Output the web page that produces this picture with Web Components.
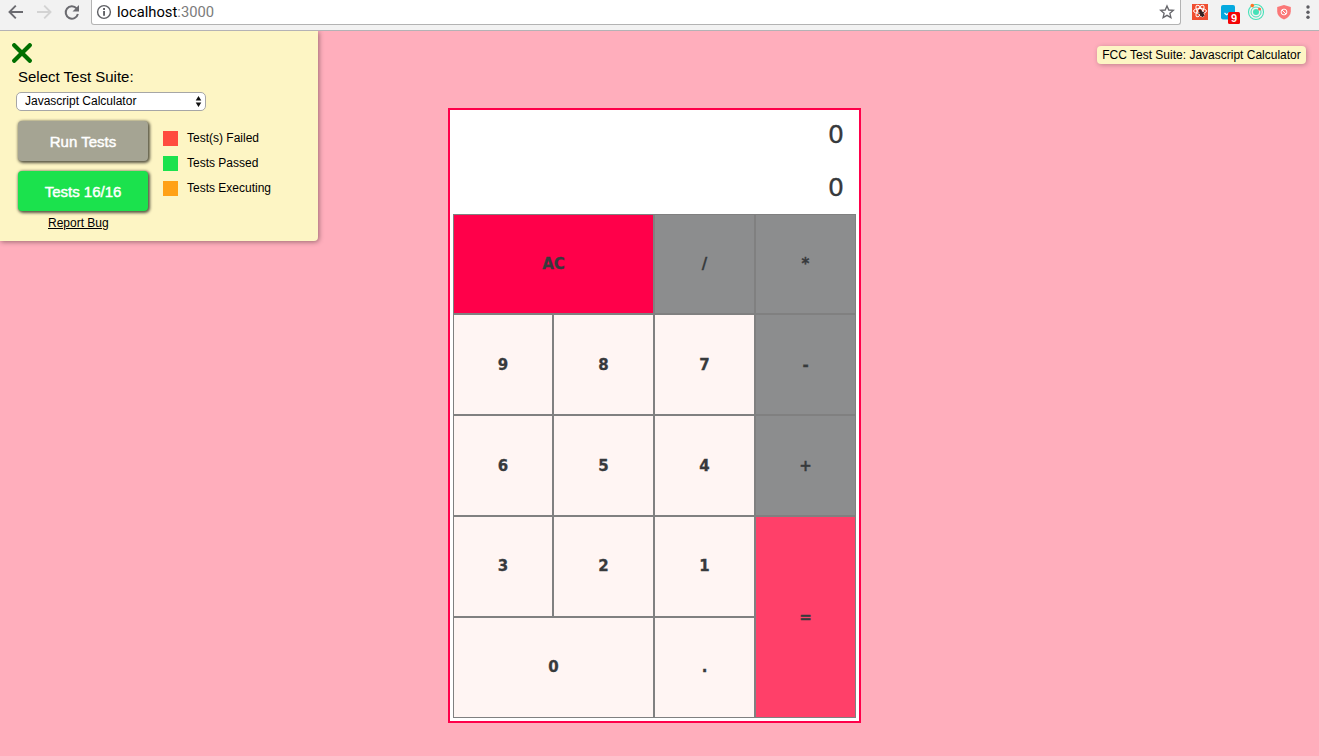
<!DOCTYPE html>
<html lang="en">
<head>
<meta charset="utf-8">
<title>Javascript Calculator</title>
<style>
html, body { margin: 0; height: 100%; overflow: hidden; }
body { font-family: "Liberation Sans", Arial, sans-serif; background: #ffaebc; }
</style>
</head>
<body>
<app-window></app-window>
<script>
const define = (name, html) => customElements.define(name, class extends HTMLElement {
  constructor() {
    super();
    const t = document.createElement('template');
    t.innerHTML = html;
    this.attachShadow({ mode: 'open' }).appendChild(t.content.cloneNode(true));
  }
});

define('browser-bar', `
<style>
:host { display: flex; box-sizing: border-box; height: 31px; background: #f2f2f2; border-bottom: 1px solid #b4b2b5; align-items: flex-start; position: relative; z-index: 1; }
svg { display: block; flex: none; }
.nav { width: 91px; height: 28px; }
.field { box-sizing: border-box; width: 1090px; height: 25px; border: 1px solid #b3b3b3; border-top: 0; border-radius: 0 0 3px 3px; background: #fff; display: flex; align-items: center; padding: 0 5px 0 4px; }
.url { flex: 1; margin-left: 5px; font: 14.75px/24px Roboto, sans-serif; color: #000; white-space: pre; }
.url span { color: #7b7b7b; }
.ext { width: 138px; height: 28px; }
.ext text { font: bold 11px "Liberation Sans", sans-serif; }
</style>
<svg class="nav" viewBox="0 0 91 28" fill="none" stroke-width="1.9">
  <path d="M23 12H10M15.8 5.7L9.5 12l6.3 6.3" stroke="#6b6b70"/>
  <path d="M37 12H50M44.2 5.7l6.3 6.3-6.3 6.3" stroke="#d3d3d3"/>
  <path d="M76.6 8.4A6.2 6.2 0 1 0 77.9 14" stroke="#6b6b70" stroke-width="2"/>
  <path d="M79 5v6.5h-6.5z" fill="#6b6b70"/>
</svg>
<div class="field">
  <svg width="16" height="16" viewBox="0 0 16 16"><circle cx="8" cy="8" r="6.4" fill="none" stroke="#5f6065" stroke-width="1.4"/><path d="M7.1 7h1.9v4.8H7.1zM7.1 4.1h1.9v1.8H7.1z" fill="#5f6065"/></svg>
  <div class="url">localhost<span>:3000</span></div>
  <svg width="16" height="16" viewBox="0 0 16 16"><path d="M8 1.9l1.8 4.1 4.5.4-3.4 2.9 1 4.4L8 11.4l-3.9 2.3 1-4.4-3.4-2.9 4.5-.4z" fill="none" stroke="#66666b" stroke-width="1.35"/></svg>
</div>
<svg class="ext" viewBox="1181 0 138 28">
  <rect x="1192" y="4" width="16" height="16" fill="#f04d2f"/>
  <g fill="none" stroke="#fff" stroke-width="1"><ellipse cx="1200" cy="11" rx="6.5" ry="2.5"/><ellipse cx="1200" cy="11" rx="6.5" ry="2.5" transform="rotate(60 1200 11)"/><ellipse cx="1200" cy="11" rx="6.5" ry="2.5" transform="rotate(120 1200 11)"/></g>
  <ellipse cx="1201.8" cy="14" rx="1.9" ry="3" transform="rotate(-25 1201.8 14)" fill="#342321"/><circle cx="1200.2" cy="10.8" r="1.4" fill="#342321"/><path d="M1198 13l6.5 2.5M1204.5 11.5l-5 5" stroke="#342321" stroke-width=".9"/>
  <rect x="1221" y="5" width="14" height="14.5" rx="2" fill="#04a9df"/>
  <path d="M1224.5 13l2 1.8 3.5-2.3" fill="none" stroke="#fff" stroke-width="1.2"/>
  <rect x="1228" y="12" width="12" height="12" rx="1.5" fill="#f30506"/>
  <text x="1231" y="22" fill="#fff">9</text>
  <g fill="none" stroke="#45e1b8"><circle cx="1256" cy="12" r="7.5" stroke-width="1.1"/><circle cx="1256" cy="12" r="5" stroke-width="1"/></g><circle cx="1256" cy="12" r="3" fill="#45e1b8"/>
  <circle cx="1252.3" cy="5.6" r="1.8" fill="#ff7426"/><circle cx="1259.5" cy="9" r="1.5" fill="#ff6442"/>
  <path d="M1284 5l6.8 2.1v4.4q0 5-6.8 8-6.8-3-6.8-8V7.1z" fill="#fb7878"/>
  <circle cx="1284" cy="12" r="2.9" fill="none" stroke="#fff" stroke-width="1"/><path d="M1282 10l4 4" stroke="#fff"/>
  <g fill="#5d5d62"><circle cx="1308" cy="7" r="1.7"/><circle cx="1308" cy="12.2" r="1.7"/><circle cx="1308" cy="17.3" r="1.7"/></g>
</svg>`);

define('action-button', `
<style>
:host { display: block; box-sizing: border-box; width: 130px; height: 40px; border-radius: 4px; background: var(--fill); color: #fff; font-size: 15px; line-height: 42px; text-align: center; -webkit-text-stroke: .45px #fff; box-shadow: 1px 1px 3px 1px rgba(0,0,0,.65); }
</style><slot></slot>`);

define('legend-item', `
<style>
:host { display: flex; align-items: center; height: 15px; font-size: 12px; }
i { width: 15px; height: 15px; background: var(--fill); margin-right: 9px; }
span { position: relative; top: -1px; }
</style><i></i><span><slot></slot></span>`);

define('test-panel', `
<style>
:host { display: block; box-sizing: border-box; width: 318px; height: 210px; background: #fdf5c4; border-radius: 0 0 4px 0; box-shadow: 1px 1px 5px rgba(0,0,0,.4); padding: 12px 0 0 12px; color: #000; }
.close { display: block; }
.label { font-size: 15px; line-height: 18px; margin: 5px 0 0 6px; }
.select { display: flex; box-sizing: border-box; width: 190px; height: 19px; margin: 6px 0 0 4px; padding: 0 3px 0 8px; border: 1px solid #a6a6a6; border-radius: 5px; background: #fff; font-size: 12px; line-height: 16px; justify-content: space-between; }
.body { display: flex; margin: 10px 0 0 6px; gap: 15px; }
.buttons { display: grid; gap: 10px; }
.legend { display: grid; gap: 10px; align-content: start; padding-top: 10px; }
.report { font-size: 12px; line-height: 14px; text-decoration: underline; margin: 5px 0 0 36px; }
</style>
<svg class="close" width="20" height="20" viewBox="0 0 20 20"><path d="M2.2 2.2l15.6 15.6M17.8 2.2L2.2 17.8" stroke="#006f00" stroke-width="4.2" stroke-linecap="round"/></svg>
<div class="label">Select Test Suite:</div>
<div class="select"><span>Javascript Calculator</span><svg width="7" height="17" viewBox="0 0 7 17"><path d="M3.5 3L6.3 7.5H.7zM3.5 14L.7 9.5h5.6z" fill="#111"/></svg></div>
<div class="body">
  <div class="buttons"><action-button style="--fill:#a5a493">Run Tests</action-button><action-button style="--fill:#1be24d">Tests 16/16</action-button></div>
  <div class="legend"><legend-item style="--fill:#ff4b3e">Test(s) Failed</legend-item><legend-item style="--fill:#1be24d">Tests Passed</legend-item><legend-item style="--fill:#ffa116">Tests Executing</legend-item></div>
</div>
<div class="report">Report Bug</div>`);

define('suite-badge', `
<style>
:host { display: block; box-sizing: border-box; width: 209px; height: 18px; border-radius: 4px; background: #fdf5c4; box-shadow: 1px 1px 5px rgba(0,0,0,.25); font-size: 12px; line-height: 19px; text-align: center; white-space: nowrap; color: #000; }
</style><slot></slot>`);

define('calc-key', `
<style>
:host { display: flex; box-sizing: border-box; border: 1px solid #808080; align-items: center; justify-content: center; background: var(--fill, #fff5f3); color: #373a3c; font: bold 15px/18px "DejaVu Sans", Verdana, sans-serif; -webkit-text-stroke: .3px #373a3c; }
</style><slot></slot>`);

define('calc-pad', `
<style>
:host { display: block; box-sizing: border-box; width: 413px; height: 615px; border: 2px solid #ff004a; background: #fff; padding: 0 3px; }
.display { height: 104px; box-sizing: border-box; padding-right: 12px; text-align: right; font: 25px/53px "DejaVu Sans", Verdana, sans-serif; color: #373a3c; -webkit-text-stroke: .3px #373a3c; }
.display div { height: 53px; position: relative; top: -2px; }
.display div + div { height: 51px; }
.keys { display: grid; grid-template-columns: 100px 101px 101px 101px; grid-template-rows: 100px repeat(4, 101px); }
.op { --fill: #8c8d8e; }
.ac { --fill: #ff004a; grid-column: span 2; }
.eq { --fill: #ff4069; grid-area: 4 / 4 / 6 / 5; }
.zero { grid-column: span 2; }
.low { padding-bottom: 2px; }
</style>
<div class="display"><div>0</div><div>0</div></div>
<div class="keys">
<calc-key class="ac">AC</calc-key><calc-key class="op">/</calc-key><calc-key class="op">*</calc-key>
<calc-key>9</calc-key><calc-key>8</calc-key><calc-key>7</calc-key><calc-key class="op">-</calc-key>
<calc-key>6</calc-key><calc-key>5</calc-key><calc-key>4</calc-key><calc-key class="op">+</calc-key>
<calc-key class="low">3</calc-key><calc-key class="low">2</calc-key><calc-key class="low">1</calc-key><calc-key class="eq">=</calc-key>
<calc-key class="zero low">0</calc-key><calc-key class="low">.</calc-key>
</div>`);

define('app-window', `
<style>
:host { display: block; height: 100vh; }
main { display: grid; grid-template-columns: 448px 413px 1fr; align-items: start; }
calc-pad { margin-top: 77px; }
suite-badge { justify-self: end; margin: 15px 13px 0 0; }
</style>
<browser-bar></browser-bar>
<main><test-panel></test-panel><calc-pad></calc-pad><suite-badge>FCC Test Suite: Javascript Calculator</suite-badge></main>`);
</script>
</body>
</html>
